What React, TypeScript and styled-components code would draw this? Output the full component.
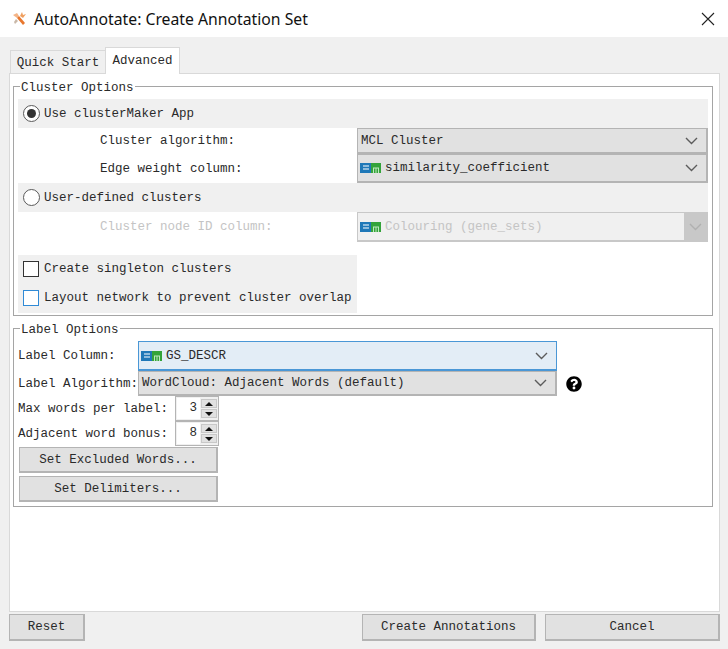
import React from "react";
import styled, { createGlobalStyle } from "styled-components";
import { FaQuestionCircle } from "react-icons/fa";

const Global = createGlobalStyle`
  html, body { margin: 0; padding: 0; background: #f0f0f0; }
  body { width: 728px; height: 649px; overflow: hidden; font-family: "Liberation Mono", monospace; font-size: 12.5px; color: #2a2a2a; }
  * { box-sizing: border-box; }
`;

const Dialog = styled.div`
  width: 728px; height: 649px; display: flex; flex-direction: column; background: #f0f0f0;
`;
const TitleBar = styled.header`
  height: 37px; flex: none; background: #fff; display: flex; align-items: center; padding: 0 12px 0 12px;
`;
const TitleText = styled.span`
  font-family: "Noto Sans", sans-serif; font-size: 15.75px; color: #111; margin-left: 7px; flex: 1;
`;
const CloseButton = styled.span`
  width: 14px; height: 14px; display: block; margin-right: 1px;
`;
const Body = styled.main`
  flex: 1; display: flex; flex-direction: column; padding: 11px 8px 9px 9px;
`;
const Tabs = styled.nav`
  height: 26px; display: flex; align-items: flex-end; padding-left: 1px; position: relative; z-index: 1; margin-bottom: -1px;
`;
const Tab = styled.div<{ $active?: boolean }>`
  display: flex; align-items: center; justify-content: center;
  height: ${(p) => (p.$active ? 27 : 24)}px;
  width: ${(p) => (p.$active ? 75 : 95)}px;
  padding-bottom: ${(p) => (p.$active ? 1 : 0)}px;
  padding-top: ${(p) => (p.$active ? 0 : 2)}px;
  background: ${(p) => (p.$active ? "#fff" : "#f0f0f0")};
  border: 1px solid #d9d9d9;
  border-bottom: ${(p) => (p.$active ? "none" : "1px solid #d9d9d9")};
  border-right: ${(p) => (p.$active ? "1px solid #d9d9d9" : "none")};
`;
const Panel = styled.section`
  height: 539px; background: #fff; border: 1px solid #d9d9d9; padding: 3px 6px 0 3px;
  display: flex; flex-direction: column; gap: 3px;
`;
const Group = styled.fieldset<{ $h: number }>`
  margin: 0; padding: 0 4px 0 4px; height: ${(p) => p.$h}px; border: 1px solid #a5a5a5; border-radius: 0; min-width: 0;
`;
const Legend = styled.legend`
  padding: 4px 1px 0; margin-left: 2px; line-height: 14px; font-size: 12.5px;
`;
const Band = styled.div`
  height: 29px; background: #f0f0f0; display: flex; align-items: center; padding-left: 5px; gap: 4px;
`;
const TopBand = styled(Band)`
  margin-top: 4px;
`;
const FieldRow = styled.div<{ $h: number }>`
  height: ${(p) => p.$h}px; display: grid; grid-template-columns: 339px 351px; align-items: start;
`;
const FieldLabel = styled.label<{ $disabled?: boolean; $h: number }>`
  height: ${(p) => p.$h}px; display: flex; align-items: center; padding-left: 82px; color: ${(p) => (p.$disabled ? "#c4c4c4" : "inherit")};
`;
const Combo = styled.div<{ $h?: number; $tone?: "focus" | "off" }>`
  height: ${(p) => p.$h ?? 26}px; display: flex; align-items: center; gap: 3px; padding: 0 8px 0 3px;
  background: ${(p) => (p.$tone === "focus" ? "#e3edf6" : p.$tone === "off" ? "#f0f0f0" : "#e1e1e1")};
  border: ${(p) => (p.$tone === "focus" ? "2px solid #4a97d6" : p.$tone === "off" ? "2px solid #c8c8c8" : "2px solid #b4b4b4")};
  border-width: ${(p) => (p.$tone === "focus" ? "1px 1px 2px 1px" : "1px 2px 2px 1px")};
  color: ${(p) => (p.$tone === "off" ? "#c4c4c4" : "inherit")};
  position: relative;
`;
const ComboText = styled.span`
  flex: 1; white-space: nowrap; margin-left: 1px;
`;
const PlainComboText = styled.span`
  flex: 1; white-space: nowrap;
`;
const OffArrow = styled.span`
  position: absolute; top: 0; right: 0; bottom: 0; width: 22px; background: #c8c8c8;
  display: flex; align-items: center; justify-content: center;
`;
const Radio = styled.span<{ $on?: boolean }>`
  width: 17px; height: 17px; flex: none; border-radius: 50%; border: 1.5px solid #5a5a5a; background: #fff; display: flex; align-items: center; justify-content: center;
  &::after { content: ""; width: 9px; height: 9px; border-radius: 50%; background: ${(p) => (p.$on ? "#333" : "transparent")}; }
`;
const Gap = styled.div<{ $h: number }>`
  height: ${(p) => p.$h}px;
`;
const CheckBand = styled.div`
  width: 339px; height: 58px; background: #f0f0f0; display: flex; flex-direction: column; padding: 6px 0 0 5px; gap: 13px;
`;
const CheckRow = styled.div`
  display: flex; align-items: center; gap: 5px; height: 16px; white-space: nowrap;
`;
const Box = styled.span<{ $focus?: boolean }>`
  width: 16px; height: 16px; flex: none; background: #fff; border: 1px solid ${(p) => (p.$focus ? "#2f8ad6" : "#333")};
`;
const LabelGrid = styled.div`
  display: flex; flex-direction: column; margin-top: 4px;
`;
const LabelRow = styled.div<{ $h: number }>`
  height: ${(p) => p.$h}px; display: flex; align-items: center;
`;
const RowLabel = styled.span<{ $w: number }>`
  width: ${(p) => p.$w}px; flex: none; white-space: nowrap;
`;
const ComboWrap = styled.div`
  width: 419px; flex: none;
`;
const HelpIcon = styled.span`
  margin-left: 9px; display: flex; font-size: 16px; color: #000;
`;
const Spinner = styled.div`
  width: 44px; height: 25px; flex: none; border: 1px solid #b4b4b4; background: #f0f0f0; display: flex; padding: 1px;
`;
const SpinValue = styled.span`
  width: 23px; background: #fff; text-align: right; padding-right: 3px; line-height: 21px;
`;
const SpinArrows = styled.span`
  flex: 1; display: flex; flex-direction: column; gap: 1px; padding: 1px 0 1px 1px;
`;
const SpinArrow = styled.span<{ $up?: boolean }>`
  flex: 1; background: #e1e1e1; border: 1px solid #c8c8c8; display: flex; align-items: center; justify-content: center;
  &::after {
    content: ""; width: 0; height: 0; border-left: 4px solid transparent; border-right: 4px solid transparent;
    ${(p) => (p.$up ? "border-bottom: 4px solid #111;" : "border-top: 4px solid #111;")}
  }
`;
const SideButtons = styled.div`
  display: flex; flex-direction: column; gap: 3px; padding: 1px 0 0 1px;
`;
const Button = styled.button<{ $w: number; $h?: number }>`
  width: ${(p) => p.$w}px; height: ${(p) => p.$h ?? 26}px; padding: 0; background: #e1e1e1; border: 1px solid #b4b4b4; border-width: 1px 2px 2px 1px;
  font-family: "Liberation Mono", monospace; font-size: 12.5px; color: #2a2a2a; flex: none;
`;
const Footer = styled.footer`
  display: flex; margin-top: 2px; gap: 9px;
`;
const Spacer = styled.div`
  flex: 1;
`;
const EmGlyph = styled.svg`
  flex: none; margin-left: -1px;
`;

const Chevron = ({ color = "#5c5c5c" }: { color?: string }) => (
  <svg width="13" height="8" viewBox="0 0 13 8" fill="none" stroke={color} strokeWidth="1.4">
    <path d="M1 1l5.5 5.5L12 1" />
  </svg>
);

const EmIcon = () => (
  <EmGlyph width="21" height="10" viewBox="0 0 21 10">
    <rect width="11" height="10" fill="#1f78b8" />
    <rect x="11" width="10" height="10" fill="#34a33a" />
    <path d="M3 3h6M3 6h6" stroke="#fff" strokeWidth="1.2" />
    <path d="M13 5h6M13.5 5v5M16 5v5M18.5 5v5" stroke="#bfe8c0" strokeWidth="1" />
  </EmGlyph>
);

const AppIcon = () => (
  <svg width="15" height="15" viewBox="0 0 15 15" style={{ flex: "none" }}>
    <path d="M1 4l4-2 2 3-2 2z" fill="#f3b487" />
    <path d="M5 7l2-2 6 7-2 2z" fill="#e8772e" />
    <path d="M8 5l2-4 1 3 3-1-3 4z" fill="#f0a060" />
    <path d="M4 8l2 2-3 3-1-2z" fill="#c9b8a8" />
  </svg>
);

export default function App() {
  return (
    <>
      <Global />
      <Dialog>
        <TitleBar>
          <AppIcon />
          <TitleText>AutoAnnotate: Create Annotation Set</TitleText>
          <CloseButton>
            <svg width="14" height="14" viewBox="0 0 14 14" stroke="#222" strokeWidth="1.1">
              <path d="M1 1l12 12M13 1L1 13" />
            </svg>
          </CloseButton>
        </TitleBar>
        <Body>
          <Tabs>
            <Tab>Quick Start</Tab>
            <Tab $active>Advanced</Tab>
          </Tabs>
          <Panel>
            <Group $h={239}>
              <Legend>Cluster Options</Legend>
              <TopBand>
                <Radio $on />
                <span>Use clusterMaker App</span>
              </TopBand>
              <FieldRow $h={26}>
                <FieldLabel $h={26}>Cluster algorithm:</FieldLabel>
                <Combo>
                  <PlainComboText>MCL Cluster</PlainComboText>
                  <Chevron />
                </Combo>
              </FieldRow>
              <FieldRow $h={29}>
                <FieldLabel $h={29}>Edge weight column:</FieldLabel>
                <Combo $h={29}>
                  <EmIcon />
                  <ComboText>similarity_coefficient</ComboText>
                  <Chevron />
                </Combo>
              </FieldRow>
              <Band>
                <Radio />
                <span>User-defined clusters</span>
              </Band>
              <FieldRow $h={31}>
                <FieldLabel $disabled $h={30}>Cluster node ID column:</FieldLabel>
                <Combo $h={30} $tone="off">
                  <EmIcon />
                  <ComboText>Colouring (gene_sets)</ComboText>
                  <OffArrow>
                    <Chevron color="#b0b0b0" />
                  </OffArrow>
                </Combo>
              </FieldRow>
              <Gap $h={12} />
              <CheckBand>
                <CheckRow>
                  <Box />
                  <span>Create singleton clusters</span>
                </CheckRow>
                <CheckRow>
                  <Box $focus />
                  <span>Layout network to prevent cluster overlap</span>
                </CheckRow>
              </CheckBand>
            </Group>
            <Group $h={188}>
              <Legend>Label Options</Legend>
              <LabelGrid>
                <LabelRow $h={30}>
                  <RowLabel $w={120}>Label Column:</RowLabel>
                  <ComboWrap>
                    <Combo $h={30} $tone="focus">
                      <EmIcon />
                      <ComboText>GS_DESCR</ComboText>
                      <Chevron />
                    </Combo>
                  </ComboWrap>
                </LabelRow>
                <LabelRow $h={25}>
                  <RowLabel $w={120}>Label Algorithm:</RowLabel>
                  <ComboWrap>
                    <Combo $h={25}>
                      <PlainComboText>WordCloud: Adjacent Words (default)</PlainComboText>
                      <Chevron />
                    </Combo>
                  </ComboWrap>
                  <HelpIcon>
                    <FaQuestionCircle />
                  </HelpIcon>
                </LabelRow>
                <LabelRow $h={25}>
                  <RowLabel $w={157}>Max words per label:</RowLabel>
                  <Spinner>
                    <SpinValue>3</SpinValue>
                    <SpinArrows>
                      <SpinArrow $up />
                      <SpinArrow />
                    </SpinArrows>
                  </Spinner>
                </LabelRow>
                <LabelRow $h={25}>
                  <RowLabel $w={157}>Adjacent word bonus:</RowLabel>
                  <Spinner>
                    <SpinValue>8</SpinValue>
                    <SpinArrows>
                      <SpinArrow $up />
                      <SpinArrow />
                    </SpinArrows>
                  </Spinner>
                </LabelRow>
                <SideButtons>
                  <Button $w={199}>Set Excluded Words...</Button>
                  <Button $w={199}>Set Delimiters...</Button>
                </SideButtons>
              </LabelGrid>
            </Group>
          </Panel>
          <Footer>
            <Button $w={76} $h={27}>Reset</Button>
            <Spacer />
            <Button $w={174} $h={27}>Create Annotations</Button>
            <Button $w={175} $h={27}>Cancel</Button>
          </Footer>
        </Body>
      </Dialog>
    </>
  );
}
